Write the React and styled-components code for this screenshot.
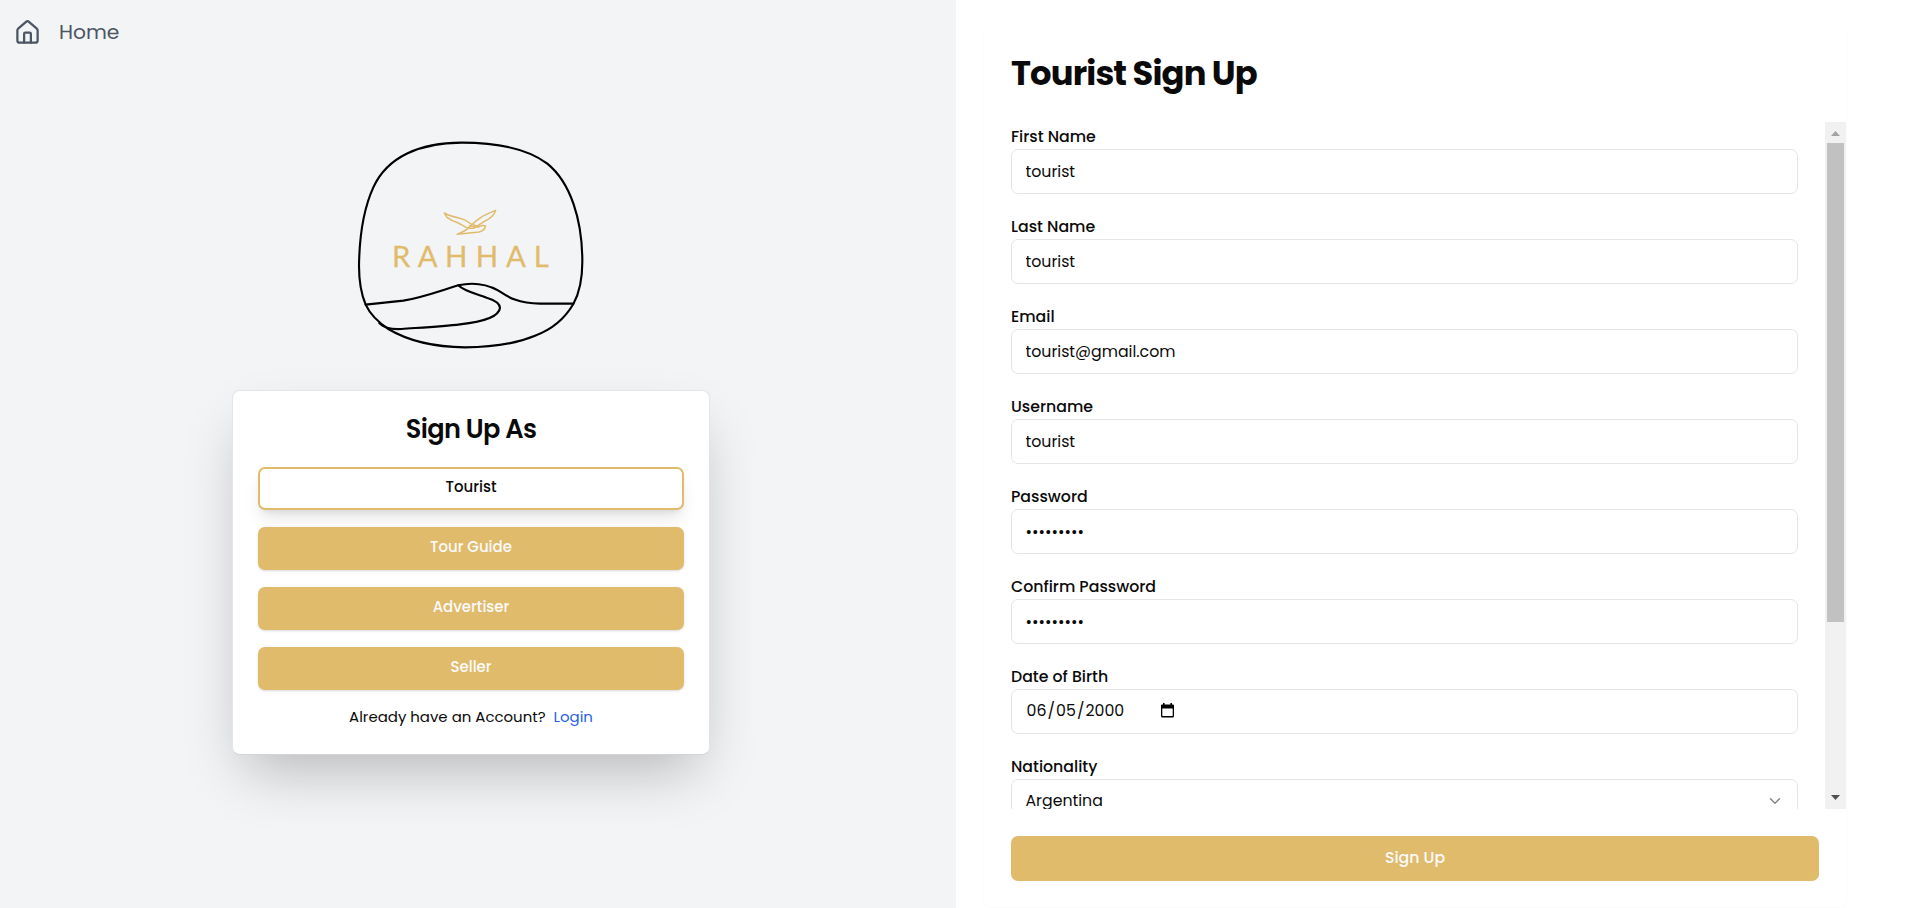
import React from "react";
import styled, { createGlobalStyle, css } from "styled-components";
import { House, ChevronDown } from "lucide-react";

const gold = "#e1bb6c";
const line = "#e5e5e5";
const ink = "#0a0a0a";

const GlobalStyle = createGlobalStyle`
  *, *::before, *::after { box-sizing: border-box; }
  body {
    margin: 0;
    color: ${ink};
    background: #fff;
    font-family: Poppins, Inter, "Open Sans", sans-serif;
    font-size: 15.75px;
  }
  h1, h2 { margin: 0; letter-spacing: -0.025em; }
  button, input { font: inherit; color: inherit; }
`;

const Page = styled.div`
  display: grid;
  grid-template-columns: 956px 1fr;
  height: 908px;
  overflow: hidden;
`;

const Aside = styled.aside`
  display: flex;
  flex-direction: column;
  align-items: center;
  padding-right: 14px;
  background: #f3f4f6;
`;

const HomeLink = styled.a`
  align-self: flex-start;
  display: flex;
  align-items: center;
  gap: 18px;
  height: 64px;
  padding-left: 14px;
  color: #4b5563;
  font-size: 20.25px;
`;

const Logo = styled.svg`
  display: block;
  flex: none;
  width: 262px;
  height: 230px;
  margin-top: 66px;
`;

const RoleCard = styled.section`
  width: 478px;
  height: 365px;
  margin-top: 30px;
  padding: 20.5px 25px 0;
  border: 1px solid ${line};
  border-bottom-color: #d4d4d5;
  border-radius: 8px;
  background: #fff;
  box-shadow: 0 27px 54px -13px rgba(0, 0, 0, 0.25);
  text-align: center;
`;

const RoleTitle = styled.h2`
  height: 55.5px;
  font-size: 25.65px;
  font-weight: 600;
  line-height: 35px;
`;

const RoleList = styled.div`
  display: flex;
  flex-direction: column;
  gap: 17px;
`;

const RoleButton = styled.button`
  height: 43px;
  padding: 0 0 3px;
  border: ${(p) => (p.$active ? `2px solid ${gold}` : "0")};
  border-radius: 7px;
  background: ${(p) => (p.$active ? "#fff" : gold)};
  color: ${(p) => (p.$active ? ink : "#fafafa")};
  box-shadow: ${(p) =>
    p.$active
      ? "0 11px 17px -3px rgba(0,0,0,.1), 0 5px 7px -4px rgba(0,0,0,.1)"
      : "0 1px 3px rgba(0,0,0,.12), 0 1px 2px -1px rgba(0,0,0,.1)"};
  font-size: 14.96px;
  font-weight: 500;
`;

const LoginLine = styled.p`
  display: flex;
  justify-content: center;
  gap: 8px;
  margin: 17px 0 0;
  font-size: 14.96px;
  line-height: 20px;
`;

const LoginLink = styled.a`
  color: #2563eb;
`;

const Main = styled.main`
  padding: 26px 68px 0 26px;
`;

const FormCard = styled.form`
  display: flex;
  flex-direction: column;
  height: 882px;
  padding-left: 28px;
  border: 1px solid #fbfbfb;
  border-top-color: #fefefe;
  border-radius: 8px;
`;

const FormTitle = styled.h1`
  height: 95px;
  padding-top: 26px;
  font-size: 33.75px;
  font-weight: 700;
  line-height: 41px;
`;

const ScrollArea = styled.div`
  display: flex;
  justify-content: space-between;
  height: 687px;
  overflow: hidden;
`;

const Fields = styled.div`
  flex: none;
  width: 787px;
`;

const Field = styled.div`
  height: 90px;
`;

const Label = styled.label`
  display: block;
  height: 27px;
  padding-top: 4px;
  font-weight: 500;
  line-height: 21px;
  white-space: nowrap;
`;

const box = css`
  width: 100%;
  height: 45px;
  border: 1px solid ${line};
  border-radius: 7px;
  background: #fff;
  outline: 0;
`;

const Input = styled.input`
  ${box}
  display: block;
  padding: 0 13.5px 1px;
`;

const DateBox = styled.div`
  ${box}
  display: flex;
  align-items: center;
  padding: 0 14.5px 3px;
  font-variant-numeric: tabular-nums;
`;

const DatePart = styled.span`
  width: 20px;
`;

const YearPart = styled.span`
  width: 75px;
`;

const Slash = styled.span`
  width: 9.5px;
  text-align: center;
`;

const SelectBox = styled.div`
  ${box}
  display: flex;
  align-items: center;
  justify-content: space-between;
  padding: 0 13px 2px 13.5px;
`;

const ScrollBar = styled.div`
  display: flex;
  flex-direction: column;
  align-items: center;
  width: 21px;
  height: 687px;
  background: #f1f1f1;
`;

const Arrow = styled.svg`
  flex: none;
  width: 21px;
  height: 21px;
  fill: ${(p) => (p.$dim ? "#a3a3a3" : "#505050")};
`;

const Thumb = styled.div`
  width: 17px;
  height: 479px;
  margin-bottom: auto;
  background: #c1c1c1;
`;

const Submit = styled.button`
  width: 808px;
  height: 45px;
  margin-top: 27px;
  padding: 0 0 2px;
  border: 0;
  border-radius: 7px;
  background: ${gold};
  color: #fafafa;
  font-weight: 500;
`;

const roles = ["Tourist", "Tour Guide", "Advertiser", "Seller"];

const fields = [
  { label: "First Name", value: "tourist" },
  { label: "Last Name", value: "tourist" },
  { label: "Email", value: "tourist@gmail.com" },
  { label: "Username", value: "tourist" },
  { label: "Password", value: "password1", type: "password" },
  { label: "Confirm Password", value: "password1", type: "password" },
];

function RahhalLogo() {
  return (
    <Logo viewBox="0 0 786 690" fill="none" strokeLinecap="round" strokeLinejoin="round">
      <g stroke="#000" strokeWidth="6.4">
        <path d="M365 38C470 38 560 54 622 101C692 158 727 270 727 395C727 450 719 487 700 522C674 566 632 600 585 617C525 642 450 652 375 652C285 651 205 633 145 597C115 577 90 552 77 524C62 488 57 450 57 408C58 330 69 240 100 172C142 80 240 38 365 38Z" />
        <path d="M77 524L190 512C250 502 310 479 355 466C400 456 440 463 474 481C500 498 530 521 600 521H700" />
        <path d="M355 466C372 484 410 492 440 503C470 512 480 521 480 534C476 565 415 577 360 583C310 589 240 593 185 597C157 599 136 597 118 580" />
      </g>
      <g stroke={gold} strokeWidth="4.4" transform="translate(285 210)">
        <path d="M28 39L36 52C46 60 58 65 70 69C82 76 90 82 100 85H116C130 76 144 66 158 59C171 52 178 44 182 31C168 37 152 43 138 52C122 62 110 74 99 85C90 93 78 98 66 103C82 101 104 99 132 96C144 93 150 86 152 78C146 76 138 77 132 80C124 77 114 75 108 72C99 65 92 58 72 54C58 51 42 47 28 39Z" />
        <path d="M104 77C112 80 122 82 132 80" />
      </g>
      <text
        x="156 233 315 407 498 581"
        y="410"
        fill={gold}
        stroke={gold}
        strokeWidth="0.8"
        fontFamily="Lato, sans-serif"
        fontSize="88"
      >
        RAHHAL
      </text>
    </Logo>
  );
}

function CalendarIcon() {
  return (
    <svg width="13" height="15" viewBox="0 0 13 15" fill="none">
      <path
        d="M0 2.5Q0 1.5 1 1.5H2V0H3.6V1.5H9.4V0H11V1.5H12Q13 1.5 13 2.5V13Q13 14.4 12 14.4H1Q0 14.4 0 13ZM1.3 5.5V13H11.7V5.5Z"
        fill="#000"
        fillRule="evenodd"
      />
    </svg>
  );
}

export default function App() {
  return (
    <Page>
      <GlobalStyle />
      <Aside>
        <HomeLink>
          <House size={27} strokeWidth={2} />
          Home
        </HomeLink>
        <RahhalLogo />
        <RoleCard>
          <RoleTitle>Sign Up As</RoleTitle>
          <RoleList>
            {roles.map((name) => (
              <RoleButton key={name} $active={name === "Tourist"}>
                {name}
              </RoleButton>
            ))}
          </RoleList>
          <LoginLine>
            Already have an Account?
            <LoginLink>Login</LoginLink>
          </LoginLine>
        </RoleCard>
      </Aside>
      <Main>
        <FormCard>
          <FormTitle>Tourist Sign Up</FormTitle>
          <ScrollArea>
            <Fields>
              {fields.map((f) => (
                <Field key={f.label}>
                  <Label>{f.label}</Label>
                  <Input type={f.type || "text"} defaultValue={f.value} />
                </Field>
              ))}
              <Field>
                <Label>Date of Birth</Label>
                <DateBox>
                  <DatePart>06</DatePart>
                  <Slash>/</Slash>
                  <DatePart>05</DatePart>
                  <Slash>/</Slash>
                  <YearPart>2000</YearPart>
                  <CalendarIcon />
                </DateBox>
              </Field>
              <Field>
                <Label>Nationality</Label>
                <SelectBox>
                  Argentina
                  <ChevronDown size={18} color="#858585" />
                </SelectBox>
              </Field>
            </Fields>
            <ScrollBar>
              <Arrow $dim viewBox="0 0 21 21">
                <path d="M6 14L10.5 9L15 14Z" />
              </Arrow>
              <Thumb />
              <Arrow viewBox="0 0 21 21">
                <path d="M6 7L10.5 12L15 7Z" />
              </Arrow>
            </ScrollBar>
          </ScrollArea>
          <Submit type="button">Sign Up</Submit>
        </FormCard>
      </Main>
    </Page>
  );
}
